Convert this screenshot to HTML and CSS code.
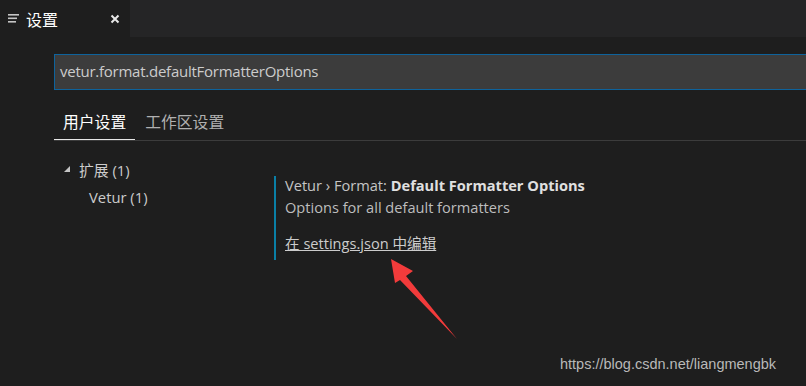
FILE: index.html
```html
<!DOCTYPE html>
<html lang="zh-CN">
<head>
    <meta charset="UTF-8">
    <meta name="viewport" content="width=device-width, initial-scale=1.0">
    <title>设置</title>
    <link rel="stylesheet" href="styles.css">
</head>
<body>
    <div class="tabbar">
        <div class="tab active">
            <svg class="tab-icon" width="12" height="12" viewBox="0 0 12 12">
                <rect x="0" y="1" width="11" height="1.6" fill="#c5c5c5"/>
                <rect x="0" y="4.5" width="9" height="1.6" fill="#c5c5c5"/>
                <rect x="0" y="8" width="8" height="1.6" fill="#c5c5c5"/>
            </svg>
            <span class="tab-title">设置</span>
            <svg class="tab-close" width="10" height="10" viewBox="0 0 10 10">
                <path d="M1.5 1.5 L8.5 8.5 M8.5 1.5 L1.5 8.5" stroke="#e8e8e8" stroke-width="2"/>
            </svg>
        </div>
    </div>

    <div class="editor">
        <div class="search">vetur.format.defaultFormatterOptions</div>

        <div class="scope-tabs">
            <div class="scope active">用户设置</div>
            <div class="scope">工作区设置</div>
        </div>

        <div class="settings-body">
            <div class="toc">
                <div class="toc-group"><span class="twisty"></span>扩展 (1)</div>
                <div class="toc-item">Vetur (1)</div>
            </div>
            <div class="setting">
                <div class="setting-title">Vetur › Format: <b>Default Formatter Options</b></div>
                <div class="setting-desc">Options for all default formatters</div>
                <a class="setting-link" href="#">在 settings.json 中编辑</a>
            </div>
        </div>
    </div>

    <svg class="arrow" width="806" height="386" viewBox="0 0 806 386">
        <polygon points="391,259 413,271 406,276 457,339 400,280 395,283" fill="#f23b3b"/>
    </svg>

    <div class="watermark">https://blog.csdn.net/liangmengbk</div>
</body>
</html>
```

FILE: styles.css
```css
body {
    margin: 0;
    width: 806px;
    height: 386px;
    overflow: hidden;
    background-color: #1e1e1e;
    color: #cccccc;
    font-family: "Open Sans", "Noto Sans CJK SC", sans-serif;
    position: relative;
}

.tabbar {
    height: 37px;
    background-color: #252526;
    display: flex;
}

.tab {
    width: 130px;
    display: flex;
    align-items: center;
    box-sizing: border-box;
    padding-left: 8px;
}

.tab.active {
    background-color: #1e1e1e;
}

.tab-icon {
    margin-top: 1px;
}

.tab-title {
    margin-left: 6px;
    font-family: "Noto Sans CJK SC", sans-serif;
    font-size: 16px;
    color: #ffffff;
}

.tab-close {
    margin-left: 52px;
}

.editor {
    padding: 17px 0 0 54px;
}

.search {
    height: 34px;
    line-height: 33px;
    background-color: #3c3c3c;
    border: 1px solid #0e639c;
    border-right: none;
    padding-left: 5px;
    font-size: 15px;
    letter-spacing: -0.25px;
    color: #cccccc;
}

.scope-tabs {
    margin-top: 16px;
    display: flex;
    border-bottom: 1px solid #3c3c3c;
    font-family: "Noto Sans CJK SC", sans-serif;
    font-size: 15.8px;
}

.scope {
    padding: 4px 9px 7px 10px;
    color: #b0b0b0;
}

.scope.active {
    color: #ffffff;
    box-shadow: inset 0 -1px 0 #e7e7e7;
    padding: 4px 9px 7px 9px;
}

.settings-body {
    display: flex;
    margin-top: 18px;
}

.toc {
    width: 220px;
    font-size: 14.8px;
    color: #cccccc;
}

.toc-group {
    display: flex;
    align-items: center;
    padding-left: 10px;
    height: 20px;
}

.twisty {
    width: 0;
    height: 0;
    border-left: 6px solid transparent;
    border-bottom: 6px solid #c5c5c5;
    margin-right: 9px;
}

.toc-item {
    padding-left: 35px;
    margin-top: 8px;
    height: 20px;
}

.setting {
    margin-top: 17px;
    border-left: 2px solid #0a7fa6;
    padding-left: 9px;
    padding-bottom: 7px;
    font-size: 14.6px;
}

.setting-title {
    color: #c5c5c5;
    line-height: 18px;
}

.setting-title b {
    color: #e0e0e0;
}

.setting-desc {
    margin-top: 3px;
    line-height: 20px;
    color: #bdbdbd;
}

.setting-link {
    display: block;
    margin-top: 16px;
    color: #cccccc;
    line-height: 20px;
}

.arrow {
    position: absolute;
    left: 0;
    top: 0;
}

.watermark {
    position: absolute;
    left: 560px;
    top: 356px;
    font-family: "Liberation Sans", sans-serif;
    font-size: 14.5px;
    color: #b9b9b9;
}
```
